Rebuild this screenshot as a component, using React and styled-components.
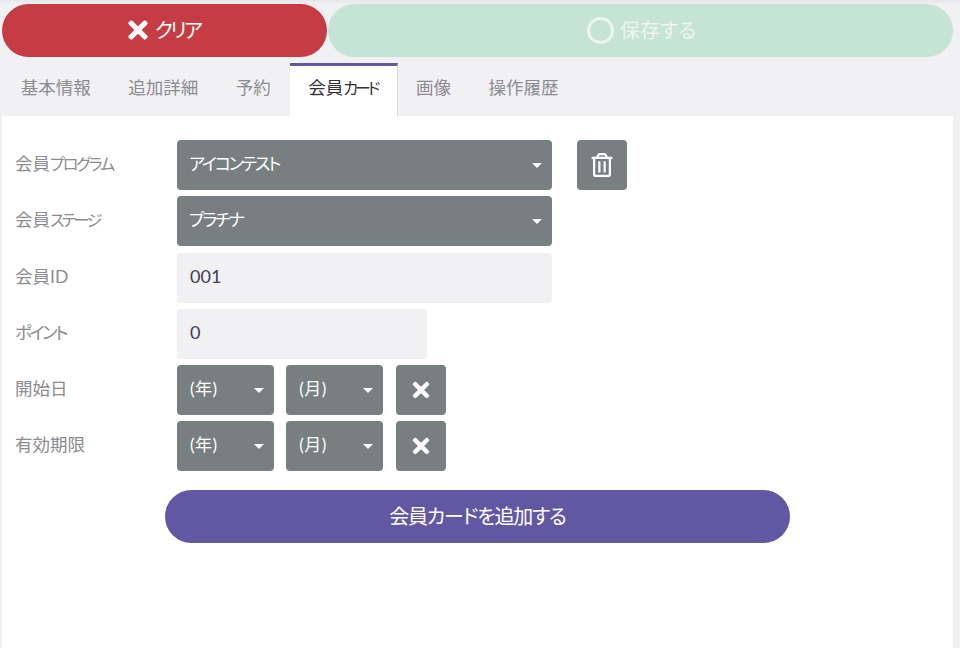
import React from 'react';
import styled, { createGlobalStyle } from 'styled-components';
import { FaTimes, FaRegTrashAlt } from 'react-icons/fa';

const GlobalStyle = createGlobalStyle`
  html, body {
    margin: 0;
    padding: 0;
    height: 100%;
    overflow: hidden;
    background-color: #f1f1f4;
  }
  body {
    font-family: "Lato", "Noto Sans CJK JP", sans-serif;
    font-feature-settings: "palt";
  }
`;

const Page = styled.div`
  width: 960px;
  height: 648px;
  box-sizing: border-box;
  padding: 4px 7px 0 2px;
  background: linear-gradient(#e6e6e9, #f1f1f4 4px);
  overflow: hidden;
`;

const TopBar = styled.div`
  display: flex;
  gap: 1px;
  height: 53px;
`;

const PillButton = styled.button`
  flex: none;
  width: ${({ $w }) => $w}px;
  box-sizing: border-box;
  display: flex;
  align-items: center;
  justify-content: center;
  gap: ${({ $gap }) => $gap}px;
  border: none;
  border-radius: 27px;
  padding: ${({ $pad }) => $pad};
  font: inherit;
  font-size: 20px;
  color: ${({ $faded }) => ($faded ? '#eef5f1' : '#fff')};
  background-color: ${({ $bg }) => $bg};
`;

const CircleMark = styled.span`
  width: 27px;
  height: 27px;
  margin-top: 2px;
  box-sizing: border-box;
  border: 3px solid #eef5f1;
  border-radius: 50%;
`;

// kana in the reference is much narrower than the installed CJK font
const Kana = styled.span`
  font-size: ${({ $size }) => $size || '0.92em'};
  letter-spacing: ${({ $ls }) => $ls}px;
`;

const Tabs = styled.div`
  display: flex;
  height: 53px;
  margin-top: 6px;
  padding-left: 0.5px;
`;

const Tab = styled.div`
  display: flex;
  align-items: center;
  box-sizing: border-box;
  padding: 0 ${({ $active }) => ($active ? 19.5 : 18.25)}px 9px 18.25px;
  font-size: 17.5px;
  color: ${({ $active }) => ($active ? '#333' : '#8b8b90')};
  background-color: ${({ $active }) => ($active ? '#fff' : 'transparent')};
  border-top: 3px solid ${({ $active }) => ($active ? '#6257a3' : 'transparent')};
  border-right: 1px solid ${({ $active }) => ($active ? '#d6d6de' : 'transparent')};
`;

const Panel = styled.div`
  height: 532px;
  box-sizing: border-box;
  padding: 24px 13px 0;
  background-color: #fff;
`;

const Form = styled.div`
  display: flex;
  flex-direction: column;
  gap: 6.25px;
`;

const Row = styled.div`
  display: grid;
  grid-template-columns: 162px auto;
  justify-content: start;
  align-items: center;
`;

const Label = styled.div`
  padding-bottom: 5px;
  font-size: 17.5px;
  color: #8b8b90;
`;

const Controls = styled.div`
  display: flex;
  gap: ${({ $gap }) => $gap || 12.25}px;
`;

const Select = styled.div`
  position: relative;
  width: ${({ $w }) => $w}px;
  height: 50px;
  box-sizing: border-box;
  display: flex;
  align-items: center;
  padding: 0 13px 5px ${({ $pl }) => $pl || 12}px;
  border-radius: 4px;
  font-size: 17px;
  letter-spacing: ${({ $ls }) => $ls || 0}px;
  color: #fff;
  background-color: #787f81;
  &::after {
    content: '';
    position: absolute;
    right: 10px;
    top: 23px;
    border-left: 5px solid transparent;
    border-right: 5px solid transparent;
    border-top: 5px solid #fff;
  }
`;

const Field = styled.div`
  width: ${({ $w }) => $w}px;
  height: 50px;
  box-sizing: border-box;
  display: flex;
  align-items: center;
  padding: 0 13px 3px;
  border-radius: 4px;
  font-size: 18px;
  color: #3d3d55;
  background-color: #f1f1f4;
`;

const IconButton = styled.button`
  width: 50px;
  height: 50px;
  display: flex;
  align-items: center;
  justify-content: center;
  padding: 0;
  border: none;
  border-radius: 4px;
  color: #fff;
  background-color: #787f81;
`;

const AddButton = styled.button`
  display: block;
  width: 625px;
  height: 53px;
  margin: 19px 0 0 150px;
  padding: 0 0 2px;
  border: none;
  border-radius: 27px;
  font: inherit;
  font-size: 20px;
  letter-spacing: -1.2px;
  color: #fff;
  background-color: #6257a3;
`;

const tabs = [
  { id: 'basic', label: '基本情報' },
  { id: 'detail', label: '追加詳細' },
  { id: 'booking', label: '予約' },
  { id: 'card', label: <>会員<Kana $ls={-3.2}>カード</Kana></>, active: true },
  { id: 'image', label: '画像' },
  { id: 'history', label: '操作履歴' },
];

const DateRow = ({ label }) => (
  <Row>
    <Label>{label}</Label>
    <Controls>
      <Select $w={97} $pl={13} $ls={0.5}>(年)</Select>
      <Select $w={97} $pl={13} $ls={0.5}>(月)</Select>
      <IconButton><FaTimes size={24} /></IconButton>
    </Controls>
  </Row>
);

const App = () => (
  <Page>
    <GlobalStyle />
    <TopBar>
      <PillButton $w={325} $gap={3} $pad="0 5px 2px 0" $bg="#c63c44">
        <FaTimes size={28} />
        <Kana $size="1em" $ls={-2.5}>クリア</Kana>
      </PillButton>
      <PillButton $w={625} $gap={6} $pad="0 0 2px 2px" $bg="#c5e4d6" $faded><CircleMark />保存する</PillButton>
    </TopBar>
    <Tabs>
      {tabs.map((t) => (
        <Tab key={t.id} $active={t.active}>{t.label}</Tab>
      ))}
    </Tabs>
    <Panel>
      <Form>
        <Row>
          <Label>会員<Kana $ls={-2.1}>プログラム</Kana></Label>
          <Controls $gap={25}>
            <Select $w={375}><Kana $size="1em" $ls={-2.1}>アイコンテスト</Kana></Select>
            <IconButton><FaRegTrashAlt size={24} /></IconButton>
          </Controls>
        </Row>
        <Row>
          <Label>会員<Kana $ls={-2.75}>ステージ</Kana></Label>
          <Select $w={375}><Kana $size="1em" $ls={-2.1}>プラチナ</Kana></Select>
        </Row>
        <Row>
          <Label>会員ID</Label>
          <Field $w={375}>001</Field>
        </Row>
        <Row>
          <Label><Kana $size="1em" $ls={-2.6}>ポイント</Kana></Label>
          <Field $w={250}>0</Field>
        </Row>
        <DateRow label="開始日" />
        <DateRow label="有効期限" />
      </Form>
      <AddButton>会員カードを追加する</AddButton>
    </Panel>
  </Page>
);

export default App;
